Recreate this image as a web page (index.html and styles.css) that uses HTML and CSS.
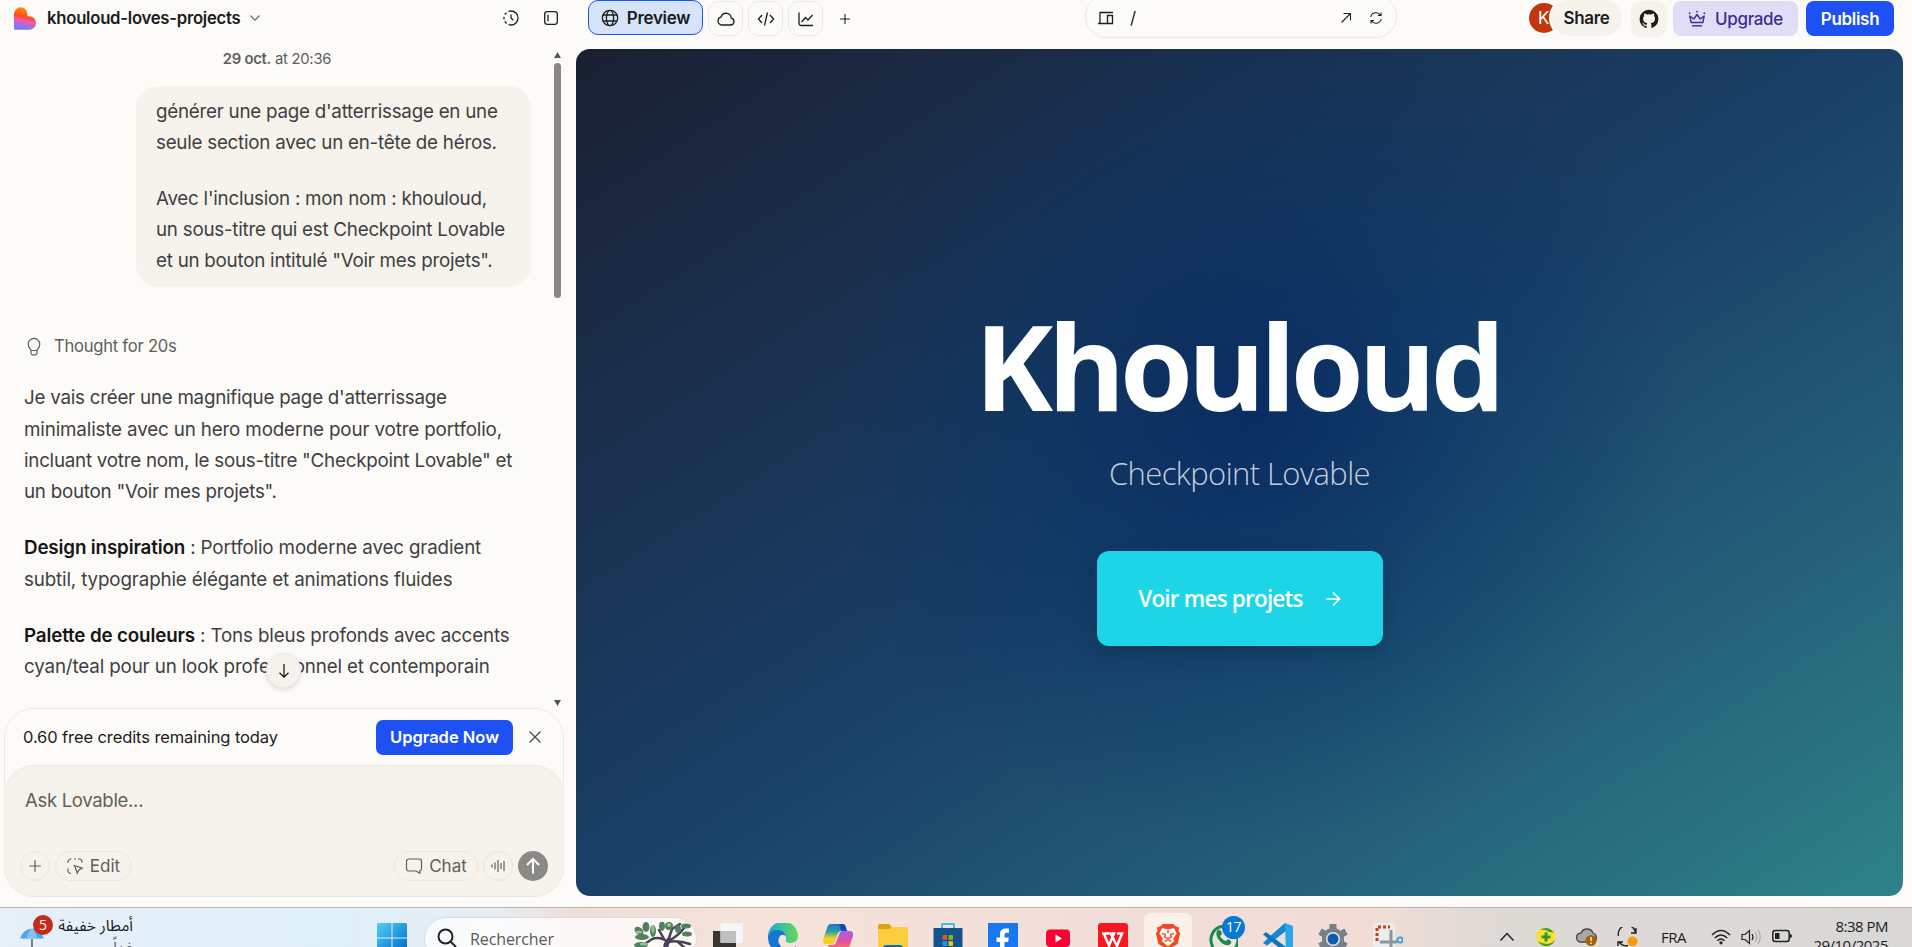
FILE: index.html
```html
<!DOCTYPE html>
<html lang="fr">
<head>
<meta charset="utf-8">
<title>khouloud-loves-projects</title>
<link rel="stylesheet" href="styles.css">
</head>
<body>
<div class="screen">
  <header class="topbar">
    <div class="project">
      <svg class="logo" width="22" height="23" viewBox="0 0 22 23"><defs><linearGradient id="heart" x1="0.55" y1="0" x2="0.35" y2="1"><stop offset="0.1" stop-color="#ff8a00"/><stop offset="0.42" stop-color="#ff4a2c"/><stop offset="0.62" stop-color="#f05aa8"/><stop offset="0.9" stop-color="#7a78ff"/></linearGradient></defs><path d="M0 7A6.7 6.7 0 0 1 13.4 7V9.2H15.2A6.8 6.8 0 0 1 15.2 22.8H0Z" fill="url(#heart)"/></svg>
      <span class="project-name">khouloud-loves-projects</span>
      <svg class="chev" width="12" height="12" viewBox="0 0 12 12"><path d="M1.500 3.500 6 8.300l4.500-4.800" class="ln thin soft"/></svg>
      <svg class="ic-history" width="18" height="18" viewBox="0 0 18 18"><g class="ln"><path d="M9 2a7 7 0 0 1 0 14"/><path d="M9 16A7 7 0 0 1 9 2" stroke-dasharray="2.600 2.200"/><path d="M9 5.500V9l2.300 2.300"/></g></svg>
      <svg width="18" height="18" viewBox="0 0 18 18"><g class="ln"><rect x="2.700" y="2.700" width="12.600" height="12.600" rx="2.500"/><path d="M6 5.800v6.400"/></g></svg>
    </div>
    <nav class="tabs">
      <button class="tab tab-on"><svg width="18" height="18" viewBox="0 0 18 18"><g class="ln"><circle cx="9" cy="9" r="7.700"/><ellipse cx="9" cy="9" rx="3.600" ry="7.700"/><path d="M2 6h14M2 12h14"/></g></svg><span>Preview</span></button>
      <button class="tab"><svg width="18" height="18" viewBox="0 0 18 18"><path class="ln" d="M4.500 15h9a3.500 3.500 0 0 0 .8-6.900A5.200 5.200 0 0 0 4.200 6.800 4.200 4.200 0 0 0 4.500 15Z"/></svg></button>
      <button class="tab"><svg width="18" height="18" viewBox="0 0 18 18"><path class="ln" d="M5 5 1.400 9 5 13M13 5l3.600 4L13 13M10.500 2.500l-3 13"/></svg></button>
      <button class="tab"><svg width="18" height="18" viewBox="0 0 18 18"><path class="ln" d="M2 2.500V13q0 2.500 2.500 2.500H16M4.500 12l4-4.500 2.500 2.500L15.500 5"/></svg></button>
      <button class="tab tab-plain"><svg width="12" height="12" viewBox="0 0 12 12"><path class="ln thin" d="M6 1v10M1 6h10"/></svg></button>
    </nav>
    <div class="url">
      <svg width="18" height="16" viewBox="0 0 18 16"><path class="ln" d="M1 13.500h9M3 13.500V2.500h13M10.500 5.500h5v8h-5z"/></svg>
      <span class="path">/</span>
      <svg class="open" width="12" height="12" viewBox="0 0 12 12"><path class="ln thin" d="M1.500 10.500l9-9M3.500 1.500h7v7"/></svg>
      <svg width="14" height="14" viewBox="0 0 14 14"><path class="ln thin" d="M1.800 6A5.300 5.300 0 0 1 11.500 4.200M12 1.500v3H9M12.200 8a5.300 5.300 0 0 1-9.700 1.800M2 12.500v-3h3"/></svg>
    </div>
    <div class="actions">
      <span class="avatar">K</span>
      <button class="share">Share</button>
      <button class="github"><svg width="20" height="20" viewBox="0 0 16 16"><path fill="#1b1b1b" d="M8 .6a7.500 7.500 0 0 0-2.400 14.600c.4.100.5-.2.500-.4v-1.400c-2.100.5-2.500-.9-2.500-.9-.3-.9-.8-1.100-.8-1.100-.7-.5 0-.5 0-.5.800.1 1.200.8 1.200.8.700 1.200 1.800.8 2.200.6.100-.5.300-.8.500-1-1.700-.2-3.400-.8-3.400-3.700 0-.8.300-1.500.8-2-.1-.2-.3-1 .1-2 0 0 .6-.2 2 .8a7 7 0 0 1 3.700 0c1.400-1 2-.8 2-.8.400 1 .2 1.800.1 2 .5.500.8 1.200.8 2 0 2.900-1.800 3.500-3.400 3.700.3.200.5.700.5 1.400v2.100c0 .2.100.5.500.4A7.500 7.500 0 0 0 8 .6Z"/></svg></button>
      <button class="upgrade"><svg width="18" height="18" viewBox="0 0 18 18"><g fill="none" stroke="#3d2d93" stroke-width="1.400" stroke-linejoin="round"><path d="M1.800 6l1.400 6.500h11.600L16.200 6l-4 3L9 4.500 5.800 9z"/><path d="M4 15.800h10"/></g><g fill="#3d2d93"><circle cx="1.600" cy="3.200" r=".9"/><circle cx="9" cy="1.700" r=".9"/><circle cx="16.400" cy="3.200" r=".9"/></g></svg><span>Upgrade</span></button>
      <button class="publish">Publish</button>
    </div>
  </header>

  <main class="work">
    <aside class="side">
      <section class="chat">
        <div class="feed">
          <p class="date"><b>29 oct.</b> at 20:36</p>
          <div class="bubble">
            <p>générer une page d'atterrissage en une<br>seule section avec un en-tête de héros.</p>
            <p>Avec l'inclusion : mon nom : khouloud,<br>un sous-titre qui est Checkpoint Lovable<br>et un bouton intitulé "Voir mes projets".</p>
          </div>
          <div class="thought"><svg width="16" height="20" viewBox="0 0 16 20"><path fill="none" stroke="#5f5f5a" stroke-width="1.200" d="M5 13.500C4.700 11.800 2.200 10.500 2.200 7.200a5.800 5.800 0 0 1 11.600 0C13.800 10.500 11.300 11.800 11 13.500ZM5 13.500v2.600a1.800 1.800 0 0 0 1.800 1.800h2.400A1.800 1.800 0 0 0 11 16.100V13.500"/></svg><span>Thought for 20s</span></div>
          <div class="answer">
            <p>Je vais créer une magnifique page d'atterrissage<br><span class="loose">minimaliste avec un hero moderne pour votre portfolio,</span><br>incluant votre nom, le sous-titre "Checkpoint Lovable" et<br>un bouton "Voir mes projets".</p>
            <p class="loose"><b>Design inspiration</b> : Portfolio moderne avec gradient<br>subtil, typographie élégante et animations fluides</p>
            <p class="loose"><b>Palette de couleurs</b> : Tons bleus profonds avec accents<br>cyan/teal pour un look professionnel et contemporain</p>
          </div>
        </div>
        <div class="scroll"><i class="up"></i><i class="thumb"></i><i class="down"></i></div>
        <button class="jump"><svg width="14" height="16" viewBox="0 0 14 16"><path class="ln" d="M7 1v13M2.500 9.800 7 14l4.500-4.200"/></svg></button>
      </section>
      <section class="composer">
        <div class="credits"><span>0.60 free credits remaining today</span><button class="now">Upgrade Now</button><svg width="14" height="14" viewBox="0 0 14 14"><path d="M1.500 1.500l11 11M12.500 1.500l-11 11" fill="none" stroke="#4b4b48" stroke-width="1.300"/></svg></div>
        <div class="input">
          <div class="ask">Ask Lovable...</div>
          <div class="tools">
            <button class="pill round"><svg width="14" height="14" viewBox="0 0 14 14"><path class="gl" d="M7 1.200v11.600M1.200 7h11.600"/></svg></button>
            <button class="pill edit"><svg width="17" height="17" viewBox="0 0 17 17"><path class="gl" d="M1 5V4a3 3 0 0 1 3-3h.5M11 1h1a3 3 0 0 1 3 3v.5M1 10.500v2A3 3 0 0 0 4 15.500M7 1h2M7.500 7.500l7.700 2.700-3.300 1.700-1.600 3.400z"/></svg><span>Edit</span></button>
            <button class="pill talk"><svg width="18" height="18" viewBox="0 0 18 18"><path class="gl" d="M4 2h10a2.500 2.500 0 0 1 2.500 2.500v7A2.500 2.500 0 0 1 14.800 14v2.300L11 14H4a2.500 2.500 0 0 1-2.500-2.500v-7A2.500 2.500 0 0 1 4 2Z"/></svg><span>Chat</span></button>
            <button class="pill round"><svg width="14" height="14" viewBox="0 0 14 14"><path class="gl" d="M1 5.500v3M4 3.500v7M7 1v12M10 4v6M13 2v10"/></svg></button>
            <button class="send"><svg width="18" height="18" viewBox="0 0 18 18"><path d="M9 16.500V2M3 8l6-6 6 6" fill="none" stroke="#fff" stroke-width="2"/></svg></button>
          </div>
        </div>
      </section>
    </aside>
    <section class="hero">
      <h1>Khouloud</h1>
      <p class="sub">Checkpoint Lovable</p>
      <button class="cta"><span>Voir mes projets</span><svg width="16" height="16" viewBox="0 0 16 16"><path d="M1 8h13.500M8 1.500 14.500 8 8 14.500" fill="none" stroke="#fff" stroke-width="1.700"/></svg></button>
    </section>
  </main>

  <footer class="taskbar">
    <div class="weather">
      <svg width="26" height="24" viewBox="0 0 26 24"><path d="M1 11C3 4 8 .8 13 .8S23 4 25 11q-2-1.600-4 0-2-1.600-4 0-2-1.600-4 0-2-1.600-4 0-2-1.600-4 0-2-1.600-4 0Z" fill="#52a5e8"/><path d="M8 10Q9 3 13 .8q4 2.200 5 9.200-2.500-1.200-5 1-2.500-2-5-1Z" fill="#83c4f4"/><path d="M13 11v12M8 19v4" stroke="#77706c" stroke-width="1.800"/></svg>
      <span class="badge red">5</span>
      <div class="forecast" dir="rtl"><span>أمطار خفيفة</span><span>غداً</span></div>
    </div>
    <svg class="start" width="30" height="30" viewBox="0 0 30 30"><defs><linearGradient id="win" x1="0" y1="0" x2="1" y2="1"><stop offset="0" stop-color="#4fd0fb"/><stop offset="1" stop-color="#0067c8"/></linearGradient></defs><path fill="url(#win)" d="M1 0h13.500v14.500H0V1ZM15.500 0H29l1 1v13.500H15.500ZM0 15.500h14.500V30H0ZM15.500 15.500H30V30H15.500Z"/></svg>
    <div class="search"><svg width="20" height="20" viewBox="0 0 20 20"><g fill="none" stroke="#222" stroke-width="2"><circle cx="8.500" cy="8.500" r="7"/><path d="M13.500 13.500 19 19"/></g></svg><span>Rechercher</span>
      <svg class="tree" width="58" height="30" viewBox="0 0 58 30"><g fill="none" stroke="#464257" stroke-linecap="round"><path stroke-width="5" d="M33 30q-3-7 2-12"/><path stroke-width="2.500" d="M34 20Q26 14 18 17L8 24M34 19l4-12 8-5M36 18q8-4 14-12M34 20q10-2 22 2M30 17l-5-9M44 20l8 7"/></g><g fill="#4f8161"><ellipse cx="5" cy="9" rx="5" ry="3.500" transform="rotate(40 5 9)"/><ellipse cx="12" cy="5" rx="3.500" ry="5"/><ellipse cx="8" cy="15" rx="7" ry="3"/><ellipse cx="19" cy="9" rx="3" ry="6"/><ellipse cx="28" cy="4" rx="3" ry="5"/><ellipse cx="7" cy="23" rx="7" ry="3"/><ellipse cx="35" cy="4" rx="4" ry="4"/><ellipse cx="44" cy="7" rx="3" ry="4"/><ellipse cx="52" cy="4" rx="5" ry="2.500"/><ellipse cx="53" cy="12" rx="5" ry="2.500"/></g><g fill="#a6bd88"><ellipse cx="5" cy="10" rx="3" ry="1.500"/><ellipse cx="19" cy="7" rx="1.500" ry="4"/><ellipse cx="10" cy="22" rx="4" ry="1.500"/><ellipse cx="35" cy="3" rx="2" ry="2"/></g></svg>
    </div>
    <div class="apps">
      <svg viewBox="0 0 30 30"><rect y="8" width="23" height="22" fill="#363532"/><rect x="7.500" width="22.500" height="20" rx="1" fill="#f7f6f6"/><rect x="7.500" y="8" width="15.500" height="12" fill="#c0bfbd"/></svg>
      <svg viewBox="0 0 30 30"><defs><linearGradient id="edge"><stop offset="0" stop-color="#21a8de"/><stop offset="1" stop-color="#63da56"/></linearGradient></defs><path d="M0 14A15 15 0 0 1 30 13q0 7-8 7-5 0-4-4 1-4-3-5-8-1-12 6Z" fill="url(#edge)"/><path d="M0 15Q1 7 9 7q8 0 9 7-1-3-5-2-4 3-2 9 2 7 12 7-5 3-10 2A15 15 0 0 1 0 15Z" fill="#1277d2"/><path d="M11 20q1 6 8 6 5 0 9-3-3 6-10 7Q9 27 11 20Z" fill="#10489a"/></svg>
      <svg viewBox="0 0 30 30"><defs><linearGradient id="cop1" x1="0" y1="0" x2="0" y2="1"><stop offset="0" stop-color="#1675e0"/><stop offset=".4" stop-color="#2aa895"/><stop offset=".7" stop-color="#f5cd27"/></linearGradient><linearGradient id="cop2" x1="0" y1="0" x2="0" y2="1"><stop offset="0" stop-color="#a45cf0"/><stop offset=".5" stop-color="#e74fa0"/><stop offset="1" stop-color="#ff8a45"/></linearGradient></defs><path d="M8 1h12q2 0 3 4l1 3h-5q-4 0-5 5l-2 5q-1 3-4 3H3q-4 0-3-4L4 5q1-4 4-4Z" fill="url(#cop1)"/><path d="M16 1h4q2 0 3 4l1 3h-6Z" fill="#1549b9"/><path d="M22 29H10q-3 0-4-4l-1-3h4q4 0 5-5l2-5q1-4 4-4h6q5 0 4 5l-4 12q-1 4-4 4Z" fill="url(#cop2)"/></svg>
      <svg viewBox="0 0 30 30"><path d="M0 3q0-2 2-2h9l3 3h14q2 0 2 2v24H0Z" fill="#e0a10e"/><path d="M0 6h11l3-2h14q2 0 2 2v24H0Z" fill="#fccd3e"/><path d="M5 30v-5q0-3 3-3h14q3 0 3 3v5Z" fill="#0f6ab5"/></svg>
      <svg viewBox="0 0 30 30"><path d="M9 6V2q0-1 1-1h10q1 0 1 1v4" fill="none" stroke="#35bdf0" stroke-width="2"/><path d="M.5 5h29v25H.5Z" fill="#15518d"/><path fill="#f04e23" d="M9.500 12H14v4.800H9.500Z"/><path fill="#80bb0b" d="M15.500 12H20v4.800h-4.500Z"/><path fill="#00a3ee" d="M9.500 18.200H14V23H9.500Z"/><path fill="#feba08" d="M15.500 18.200H20V23h-4.500Z"/></svg>
      <svg viewBox="0 0 30 30"><path fill="#1877f2" d="M0 0h30v30H0Z"/><path fill="#fff" d="M12 30V19H8.500v-4.500H12V11q0-5.500 5.500-5.500H21v4.300h-2.500q-2 0-2 2v2.700h4.300l-.7 4.500h-3.600V30Z"/></svg>
      <svg viewBox="0 0 30 30"><rect x="3" y="6.500" width="24" height="17.500" rx="4" fill="#fb0033"/><path fill="#fff" d="m12.500 11.500 6.500 4-6.500 4Z"/></svg>
      <svg viewBox="0 0 30 30"><rect width="30" height="34" rx="3" fill="#fb1622"/><path fill="none" stroke="#fff" stroke-width="2.500" d="M4 10.500h12l-5 12L6 11M13 11l6 12 5-12.500h-5"/></svg>
      <div class="tile"><svg viewBox="0 0 30 30"><path fill="#f4491d" d="m9 0-3 3-4 1 1 4-2 3 3 12 11 7 11-7 3-12-2-3 1-4-4-1-3-3Z"/><path fill="#fff" d="m8 5 7 1 7-1 3 6-4 6 1 3-7 6-7-6 1-3-4-6Z"/><path stroke="#f4491d" stroke-width="1.600" fill="none" d="m8 11 4 1-1 3 4 2 4-2-1-3 4-1M15 7v4M11 20l4-2 4 2"/></svg></div>
      <div class="wa"><svg viewBox="0 0 30 30"><path d="M2 30l2.500-7A13.500 13.500 0 1 1 9 28Z" fill="#f2e4dd" stroke="#1a8a4e" stroke-width="3"/><path fill="#1a8a4e" d="M9 8q2-2 4 0l1 3-2 2q2 4 6 5l2-2 3 2q1 2-2 4-6 1-10-5-4-5-2-9Z"/></svg><span class="badge blue">17</span></div>
      <svg viewBox="0 0 30 30"><path fill="#1688cf" d="m21 0 2 1v7L4 22.500 0 20l4-4L22 0Z"/><path fill="#0b76bd" d="M0 11.500 3 9l20 15v6l-3-2Z"/><path fill="#29a7ec" d="m22 0 8 3v27h-7Z"/></svg>
      <svg viewBox="0 0 30 30"><circle cx="15" cy="16" r="11" fill="#788087"/><g stroke="#788087" stroke-width="7"><path d="M15 1v30M2 8.500l26 15M28 8.500l-26 15"/></g><circle cx="15" cy="16" r="7" fill="#e2e8ee"/><circle cx="15" cy="16" r="5.500" fill="#0b5cad"/></svg>
      <svg class="snip" viewBox="0 0 30 30"><rect width="22" height="30" rx="2" fill="#e9edf0"/><path d="M4 18V4h13" fill="none" stroke="#d13b15" stroke-width="3" stroke-dasharray="3 2"/><path d="M18 7v23M7 19h17" stroke="#8c959d" stroke-width="3"/><circle cx="27" cy="17" r="2.600" fill="none" stroke="#30a2e3" stroke-width="1.800"/><circle cx="17" cy="28" r="2.600" fill="none" stroke="#30a2e3" stroke-width="1.800"/></svg>
    </div>
    <div class="tray">
      <svg class="t-up" width="16" height="10" viewBox="0 0 16 10"><path d="M1.500 8.500 8 1.500l6.500 7" fill="none" stroke="#222" stroke-width="1.500"/></svg>
      <svg width="20" height="20" viewBox="0 0 20 20"><circle cx="10" cy="10" r="9.700" fill="#ffdf2c"/><path d="M4 3Q12-2 18 5.500L13 5Q9 2 4 3ZM2 14q3 6 10 5 5-1 7-6-4 4-8 4-5 0-9-3Z" fill="#35a344"/><path d="M10 5.500v9M5.500 10h9" stroke="#2c992e" stroke-width="3"/></svg>
      <svg width="21" height="20" viewBox="0 0 21 20"><path d="M5 15a4.500 4.500 0 0 1 0-9A6.500 6.500 0 0 1 17 6a5 5 0 0 1 1 9Z" fill="#aaa9a9" stroke="#454545" stroke-width="1.300"/><circle cx="15" cy="13.500" r="5.500" fill="#a96100"/><path d="M15 10v4M15 15.500v1.500" stroke="#fff" stroke-width="1.400"/></svg>
      <svg width="21" height="20" viewBox="0 0 21 20"><path d="M1.500 9A8.500 8.500 0 0 1 18.500 5M19 1v5h-5M1 19v-4h5M2 15q4 5 9 3.500" fill="none" stroke="#222" stroke-width="1.400"/><circle cx="15.500" cy="14.500" r="5" fill="#fa9a0a"/></svg>
      <span class="lang">FRA</span>
      <svg width="20" height="16" viewBox="0 0 20 16"><g fill="none" stroke="#222" stroke-width="1.500"><path d="M1 6Q10-3 19 6M3.800 9q6.200-6 12.400 0M6.500 11.800q3.500-3.500 7 0"/></g><circle cx="10" cy="13.800" r="1.600" fill="#222"/></svg>
      <svg width="21" height="16" viewBox="0 0 21 16"><path d="M1 5.500h3L8.500 1.500v13L4 10.500H1Z" fill="none" stroke="#222" stroke-width="1.200"/><path d="M11 5q2 3 0 6" fill="none" stroke="#222" stroke-width="1.200"/><path d="M14 3q3.500 5 0 10M17 1q4.500 7 0 14" fill="none" stroke="#aaa" stroke-width="1.200"/></svg>
      <svg width="21" height="14" viewBox="0 0 21 14"><rect x=".8" y="1.500" width="16.400" height="11" rx="2.500" fill="none" stroke="#222" stroke-width="1.500"/><rect x="3" y="4" width="4.500" height="6" fill="#222"/><path d="M18 5q2 0 2 2t-2 2Z" fill="#222"/></svg>
      <div class="clock"><span>8:38 PM</span><span>29/10/2025</span></div>
    </div>
  </footer>
</div>
</body>
</html>
```
FILE: styles.css
```css
* { box-sizing: border-box; margin: 0; padding: 0; }
body { overflow: hidden; font-family: Inter, "Liberation Sans", sans-serif; color: #1b1b1b; background: #fcfbf8; }
button { font: inherit; color: inherit; border: 0; background: none; display: flex; align-items: center; justify-content: center; white-space: nowrap; flex: none; }
svg { display: block; flex: none; }
.ln { fill: none; stroke: #1f1f1f; stroke-width: 1.3; }
.thin { stroke-width: 1.1; }
.soft { stroke: #5f5f5a; }
.gl { fill: none; stroke: #5f5f5a; stroke-width: 1.2; }
.screen { width: 1912px; height: 947px; display: grid; grid-template-rows: 49px 858px 40px; overflow: hidden; }

/* top bar */
.topbar { display: flex; align-items: center; height: 36px; }
.project { width: 588px; display: flex; align-items: center; padding-left: 14px; }
.project-name { margin-left: 11px; font-size: 16.7px; font-weight: 600; width: 194px; white-space: nowrap; letter-spacing: -.25px; }
.chev { margin-left: 8px; }
.ic-history { margin-left: 241px; margin-right: 22px; }
.tabs { display: flex; gap: 5px; width: 497px; align-items: center; }
.tab { width: 35px; height: 35px; border: 1px solid #eceae4; border-radius: 10px; margin-top: 1px; }
.tab-on { width: 115px; margin-top: -1px; gap: 8px; border: 1px solid #1d51f4; background: #d6e4f9; font-size: 17px; font-weight: 600; letter-spacing: -.3px; }
.tab-plain { border: 0; margin-left: -1px; }
.url { width: 312px; height: 43px; margin-top: -3px; border: 1px solid #eceae4; border-radius: 21px; display: flex; align-items: center; padding: 3px 13px 0 11px; }
.path { margin-left: 15px; font-size: 17px; }
.open { margin-left: auto; margin-right: 17px; }
.actions { display: flex; align-items: center; margin-left: 132px; }
.avatar { width: 30px; height: 30px; border-radius: 50%; background: #c1370d; color: #fff; font-size: 17px; line-height: 30px; padding-left: 9px; }
.share { width: 71px; height: 36px; margin-left: -8px; border-radius: 18px; background: #f6f3ec; font-size: 17px; font-weight: 600; letter-spacing: -.3px; box-shadow: 0 0 0 2px #fcfbf8; }
.github { width: 35px; height: 35px; border-radius: 9px; margin: 1px 7px 0 9px; background: #f6f3ec; box-shadow: 0 1px 2px rgba(0,0,0,.04); }
.upgrade { width: 125px; height: 35px; margin-top: 1px; border-radius: 8px; gap: 9px; background: #e0ddf6; color: #3d2d93; font-size: 17px; font-weight: 550; letter-spacing: -.35px; }
.publish { width: 88px; height: 35px; margin: 1px 0 0 8px; border-radius: 8px; background: #1d51f4; color: #fff; font-size: 17px; font-weight: 600; letter-spacing: -.3px; }

/* chat column */
.work { display: grid; grid-template-columns: 576px 1327px; }
.side { display: grid; grid-template-rows: 659px 188px; }
.chat { position: relative; display: flex; overflow: hidden; }
.feed { width: 554px; font-size: 18.8px; letter-spacing: -.25px; line-height: 31.25px; color: #3f3f42; white-space: nowrap; }
.date { text-align: center; font-size: 14.8px; line-height: 20px; color: #5f5f5a; }
.date b { font-weight: 600; }
.bubble { width: 395px; height: 201px; margin: 17px 0 0 136px; padding: 10px 20px; border-radius: 22px; background: #f6f3ec; }
.bubble p + p { margin-top: 24px; }
.thought { display: flex; align-items: center; gap: 12px; margin: 44px 0 0 26px; font-size: 16.6px; color: #5f5f5a; }
.answer { margin: 20px 0 0 24px; }
.answer p { margin-bottom: 25px; }
.answer b { font-weight: 600; color: #151515; }
.loose { letter-spacing: -.15px; }
.scroll { display: flex; flex-direction: column; padding-top: 3px; width: 8px; height: 100%; }
.scroll i { display: block; width: 7px; }
.up { height: 6px; background: #555; clip-path: polygon(50% 0, 100% 100%, 0 100%); }
.thumb { height: 235px; margin-top: 5px; border-radius: 4px; background: #888785; }
.down { height: 6px; margin: auto 0 2px; background: #555; clip-path: polygon(0 0, 100% 0, 50% 100%); }
.jump { position: absolute; left: 266px; top: 604px; width: 35px; height: 35px; border-radius: 50%; background: #f6f3ec; border: 1px solid #eeebe4; box-shadow: 0 2px 4px rgba(0,0,0,.12); }
.composer { width: 560px; margin-left: 4px; border: 1px solid #eceae4; border-radius: 30px; }
.credits { height: 56px; display: flex; align-items: center; padding-left: 18px; font-size: 16.5px; letter-spacing: -.1px; white-space: nowrap; }
.now { width: 137px; height: 35px; margin-left: auto; margin-right: 15px; border-radius: 7px; background: #1d51f4; color: #fff; font-weight: 600; }
.credits svg { margin-right: 21px; }
.input { height: 132px; margin: 0 -1px; border: 1px solid #eceae4; border-radius: 30px; background: #f6f3ec; padding: 18px 15px 0; color: #5f5f5a; }
.ask { font-size: 18.5px; line-height: 32px; padding-left: 5px; letter-spacing: -.3px; }
.tools { display: flex; align-items: center; gap: 5px; margin-top: 35px; font-size: 17px; letter-spacing: -.3px; }
.pill { height: 30px; border: 1px solid #eae7df; border-radius: 15px; gap: 6px; }
.round { width: 30px; }
.edit { width: 77px; }
.talk { width: 84px; margin-left: auto; }
.send { width: 30px; height: 30px; border-radius: 50%; background: #8a8986; }

/* preview */
.hero { height: 847px; border-radius: 14px; display: flex; flex-direction: column; align-items: center; padding-top: 242px; color: #fff; font-family: "Open Sans", "Noto Sans", sans-serif;
  background: radial-gradient(circle at 51% 44%, rgba(0,34,96,.62), rgba(0,48,104,.32) 230px, rgba(0,60,110,0) 430px), linear-gradient(to bottom right, #1a2032 0%, #1a3150 27%, #1a4067 50%, #245f78 75%, #2e8288 100%); }
.hero h1 { font-size: 118px; line-height: 150px; font-weight: 700; letter-spacing: -5.3px; margin-left: -4px; }
.sub { font-size: 31px; line-height: 48px; font-weight: 300; margin-top: 8px; color: #c3cddb; letter-spacing: -.6px; }
.cta { width: 286px; height: 95px; margin-top: 54px; border-radius: 12px; gap: 22px; background: #1cd6e8; font-size: 22.5px; font-weight: 650; letter-spacing: -.8px; box-shadow: 0 8px 20px rgba(0,20,50,.22); }

/* system taskbar */
.taskbar { display: flex; align-items: flex-start; overflow: hidden; border-top: 1px solid #b5b1af; font-family: "Open Sans", "Noto Sans", sans-serif;
  background: linear-gradient(90deg, #e7eff8 0, #dff0fa 340px, #e6edf2 500px, #f0dfd9 570px, #f5e4d9 760px, #f3e0da 1000px, #f1dcd6 1380px, #dfdad6 1480px, #d9d8d6 1912px); }
.weather { position: relative; display: flex; width: 377px; padding: 20px 0 0 19px; }
.badge { position: absolute; border-radius: 50%; color: #fff; text-align: center; }
.red { left: 33px; top: 7px; width: 20px; height: 20px; line-height: 20px; font-size: 14px; background: #c42b1c; }
.blue { left: 14px; top: -7px; width: 23px; height: 23px; line-height: 22px; font-size: 14px; letter-spacing: -.5px; background: #0878d3; }
.forecast { display: flex; flex-direction: column; width: 74px; margin: -13px 0 0 14px; font: 15.5px/22px "Noto Sans Arabic", "DejaVu Sans", sans-serif; white-space: nowrap; }
.forecast span + span { color: #666; }
.start { margin-top: 15px; }
.search { display: flex; width: 273px; height: 44px; margin: 9px 16px 0 17px; border: 1px solid #dcdcdc; border-radius: 22px; background: rgba(255,255,255,.75); padding: 10px 0 0 12px; font-size: 16px; letter-spacing: -.1px; line-height: 22px; color: #5a5a5a; }
.search span { margin-left: 13px; width: 164px; }
.tree { margin-top: -6px; }
.apps { display: flex; gap: 25px; padding-top: 15px; }
.apps svg { width: 30px; height: 30px; }
.tile { width: 48px; height: 44px; margin: -10px -9px 0; border-radius: 6px; background: #f9efeb; display: flex; justify-content: center; padding-top: 9px; }
.tile svg { width: 26px; }
.wa { position: relative; }
.tray { display: flex; align-items: flex-start; margin-left: 96px; padding-top: 19px; gap: 20px; color: #1c1c1c; font-size: 15px; line-height: 19px; }
.t-up { margin: 5px 1px 0 0; }
.lang { margin: 1px 8px 0 3px; width: 27px; letter-spacing: -.5px; }
.lang ~ svg { margin: 2px -5px 0 -5px; }
.clock { margin: -10px 0 0 -2px; width: 82px; display: flex; flex-direction: column; align-items: flex-end; letter-spacing: -.5px; }
```
